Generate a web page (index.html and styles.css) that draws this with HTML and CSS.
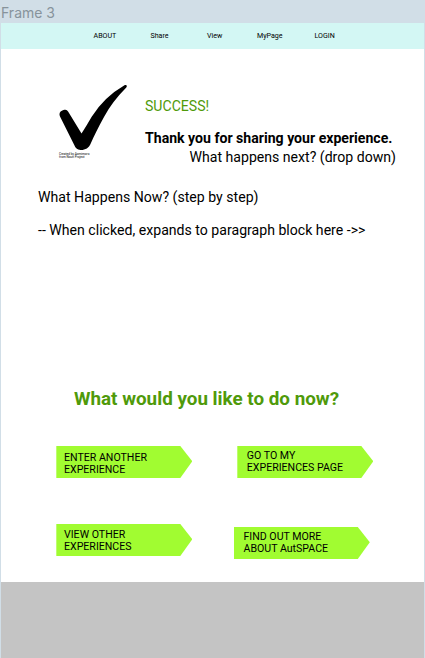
FILE: index.html
```html
<!DOCTYPE html>
<html lang="en">
<head>
<meta charset="utf-8">
<title>Frame 3</title>
<link rel="stylesheet" href="styles.css">
</head>
<body>
<div class="frame-label">Frame 3</div>
<div class="frame">
  <nav class="nav">
    <a>ABOUT</a><a>Share</a><a>View</a><a>MyPage</a><a>LOGIN</a>
  </nav>
  <main>
    <section class="hero">
      <div class="check">
        <svg viewBox="0 0 70 68" width="70" height="68" aria-hidden="true"><path d="M1 31.500C-.5 28 1.500 26 4.500 25C7.500 24 8.800 25.500 10 28L22.500 48.500C26 43 29 38 32.700 31.700Q45 12 65.500 .2C67.500 -.3 68.500 1 67.300 2.600Q53 17 45 32C39.500 42 35 51 31.500 59C30 63 26 65.200 21.500 65C18 64.500 16.500 63 15.500 60.500Z"/></svg>
        <div class="credit">Created by Aomimoro<br>from Noun Project</div>
      </div>
      <div class="message">
        <div class="success">SUCCESS!</div>
        <div class="thanks">Thank you for sharing your experience.</div>
        <div class="next">What happens next? (drop down)</div>
      </div>
    </section>
    <section class="steps">
      <p>What Happens Now? (step by step)</p>
      <p>-- When clicked, expands to paragraph block here -&gt;&gt;</p>
    </section>
    <h1>What would you like to do now?</h1>
    <section class="actions">
      <a class="action">ENTER ANOTHER<br>EXPERIENCE</a>
      <a class="action my-page">GO TO MY<br>EXPERIENCES PAGE</a>
      <a class="action view-other">VIEW OTHER<br>EXPERIENCES</a>
      <a class="action find-out">FIND OUT MORE<br>ABOUT AutSPACE</a>
    </section>
  </main>
  <footer></footer>
</div>
</body>
</html>
```
FILE: styles.css
```css
* { box-sizing: border-box; }
body {
  margin: 0;
  height: 658px;
  overflow: hidden;
  display: flex;
  flex-direction: column;
  background: #d1dee7;
  color: #000;
  font-family: Roboto, sans-serif;
}
.frame-label {
  height: 23px;
  padding: 4px 0 0 1px;
  font: 14px/18px Inter, sans-serif;
  color: #87939b;
}
.frame {
  flex: 1;
  margin: 0 1px;
  background: #fff;
  display: flex;
  flex-direction: column;
}
.nav {
  height: 26px;
  padding: 0 0 1px 92.500px;
  display: grid;
  grid-template-columns: 57px 56.500px 50px 57.500px auto;
  align-items: center;
  background: #d3f7f4;
  font-size: 7.100px;
}
main { height: 533px; }
.hero {
  display: flex;
  padding: 36px 0 0 58px;
}
.check { width: 86px; height: 83px; }
.check svg { display: block; }
.credit {
  font-size: 3.150px;
  line-height: 3px;
  white-space: nowrap;
}
.message {
  padding-top: 12px;
  font-size: 14.100px;
  line-height: 18px;
  white-space: nowrap;
}
.success { color: #4f9a0a; }
.thanks { margin-top: 14px; font-weight: 700; }
.next { margin: 1px 0 0 44.500px; }
.steps {
  padding: 20px 0 0 37px;
  font-size: 14.120px;
  line-height: 18px;
}
.steps p { margin: 0 0 15px; }
h1 {
  margin: 146px 0 0 73px;
  color: #4f9a0a;
  font-size: 18.830px;
  line-height: 28px;
  font-weight: 700;
}
.actions {
  display: grid;
  grid-template-columns: 181px 136px;
  row-gap: 46px;
  padding: 33px 0 0 55.300px;
}
.action {
  width: 136px;
  height: 32px;
  padding: 6px 0 0 7.700px;
  background: #a1fc31;
  clip-path: polygon(0 0, 124px 0, 100% 48%, 124px 100%, 0 100%);
  font-size: 10.600px;
  line-height: 12.400px;
  white-space: nowrap;
}
.my-page { padding: 3.500px 0 0 9.500px; }
.view-other { padding-top: 5px; }
.find-out { margin: 3px 0 0 -3.500px; padding: 3.500px 0 0 9.700px; }
footer { flex: 1; background: #c4c4c4; }
```
